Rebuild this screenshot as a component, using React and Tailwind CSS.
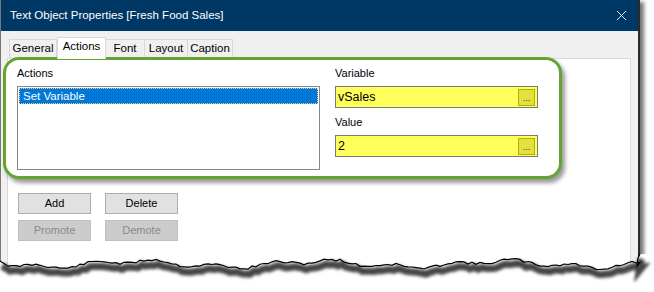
import { X } from 'lucide-react'

const FONT = { fontFamily: '"Liberation Sans", Arial, sans-serif' }

const TABS = [
  { name: 'General', w: 48 },
  { name: 'Actions', w: 49, active: true },
  { name: 'Font', w: 40 },
  { name: 'Layout', w: 44 },
  { name: 'Caption', w: 46 },
]

// jagged paper edge across the bottom
function tornPoints() {
  let s = 11
  const rnd = () => { s = (s * 9301 + 49297) % 233280; return s / 233280 }
  const pts = []
  for (let x = 0; x <= 640; x += 4) {
    let y = 10 + 2.8 * Math.sin(x / 29) + 2 * Math.sin(x / 9.5 + 1) + (rnd() - 0.5) * 2.6
    if (x < 6) y = 7 + x * 0.6
    pts.push([x, y.toFixed(1)])
  }
  pts.push([637, 12], [638, 4], [640, 0])
  return pts
}

function TornEdge() {
  const pts = tornPoints()
  const line = pts.map(([x, y], i) => `${i ? 'L' : 'M'}${x} ${y}`).join(' ')
  const fill = `${line} L654 0 L654 40 L0 40 Z`
  return (
    <svg className="absolute left-0 top-[254px]" width="654" height="38" viewBox="0 0 654 38">
      <defs>
        <filter id="blur" x="-5%" y="-50%" width="110%" height="200%">
          <feGaussianBlur stdDeviation="1.8" />
        </filter>
      </defs>
      <path d={fill} fill="#fff" />
      <path d={line} fill="none" stroke="#444" strokeWidth="7" transform="translate(2 5)" filter="url(#blur)" />
      <path d={line} fill="none" stroke="#000" strokeWidth="1.2" />
    </svg>
  )
}

function YellowField({ value }) {
  return (
    <div className="w-[203px] h-[22px] bg-[#ffff5c] border border-[#7a7a7a] flex items-center justify-between pl-[2px] pr-[2px]">
      <span className="text-[12.5px] text-black leading-none">{value}</span>
      <div className="w-[17px] h-[17px] bg-[#e3e040] border border-[#b4b000] flex items-end justify-center pb-[2px]">
        <span className="text-[9px] leading-none text-[#202060]">...</span>
      </div>
    </div>
  )
}

function Btn({ children, disabled }) {
  return (
    <div className={disabled
      ? 'w-[73px] h-[21px] bg-[#cccccc] border border-[#bfbfbf] text-[#8a8a8a] flex items-center justify-center text-[11px]'
      : 'w-[73px] h-[21px] bg-[#e1e1e1] border border-[#adadad] text-black flex items-center justify-center text-[11px]'}>
      {children}
    </div>
  )
}

export default function App() {
  return (
    <div className="w-[654px] h-[292px] bg-white relative overflow-hidden" style={FONT}>
      <div className="w-[640px] h-[292px] border-l border-r-2 border-l-[#777] border-r-[#2a2a2a] shadow-[4px_2px_4px_rgba(0,0,0,0.55)]">
        <div className="h-[31px] bg-[#003865] flex items-center justify-between pl-[9px] pr-[8px]">
          <span className="text-white text-[11.5px]">Text Object Properties [Fresh Food Sales]</span>
          <X size={17} strokeWidth={1.3} color="#fff" />
        </div>
        <div className="h-[261px] bg-[#f0f0f0] pt-[5px] pl-[6px] pr-[7px]">
          <div className="flex items-end h-[22px] pl-[2px]">
            {TABS.map(t => (
              <div key={t.name}
                className={t.active
                  ? 'h-[22px] bg-white border border-b-0 border-[#d9d9d9] flex items-center justify-center text-[11.5px] text-black relative z-10 -mb-px pb-[3px]'
                  : 'h-[19px] bg-[#f0f0f0] border border-b-0 border-[#d9d9d9] flex items-center justify-center text-[11.5px] text-black -ml-px first:ml-0'}
                style={{ width: t.w }}>
                {t.name}
              </div>
            ))}
          </div>
          <div className="bg-white border border-[#d9d9d9] h-[240px]">
            <div className="ml-[-5px] mt-[-2px] w-[559px] h-[122px] border-[3px] border-[#66a432] rounded-[16px] shadow-[3px_4px_4px_rgba(0,0,0,0.4)] flex pl-[11px] pt-[6px] gap-[15px] bg-white relative">
              <div className="flex flex-col">
                <span className="text-[11px] text-black h-[20px] leading-[14px]">Actions</span>
                <div className="w-[303px] h-[84px] border border-[#828790] bg-white p-px">
                  <div className="h-[16px] bg-[#0078d7] border border-dotted border-[#f7c78d] text-white text-[11.5px] leading-[14px] pl-[3px]">Set Variable</div>
                </div>
              </div>
              <div className="flex flex-col">
                <span className="text-[11px] text-black h-[20px] leading-[14px]">Variable</span>
                <YellowField value="vSales" />
                <span className="text-[11px] text-black h-[27px] leading-[14px] pt-[7px]">Value</span>
                <YellowField value="2" />
              </div>
            </div>
            <div className="flex flex-col gap-[6px] pl-[10px] pt-[14px]">
              <div className="flex gap-[14px]">
                <Btn>Add</Btn>
                <Btn>Delete</Btn>
              </div>
              <div className="flex gap-[14px]">
                <Btn disabled>Promote</Btn>
                <Btn disabled>Demote</Btn>
              </div>
            </div>
          </div>
        </div>
      </div>
      <TornEdge />
    </div>
  )
}
